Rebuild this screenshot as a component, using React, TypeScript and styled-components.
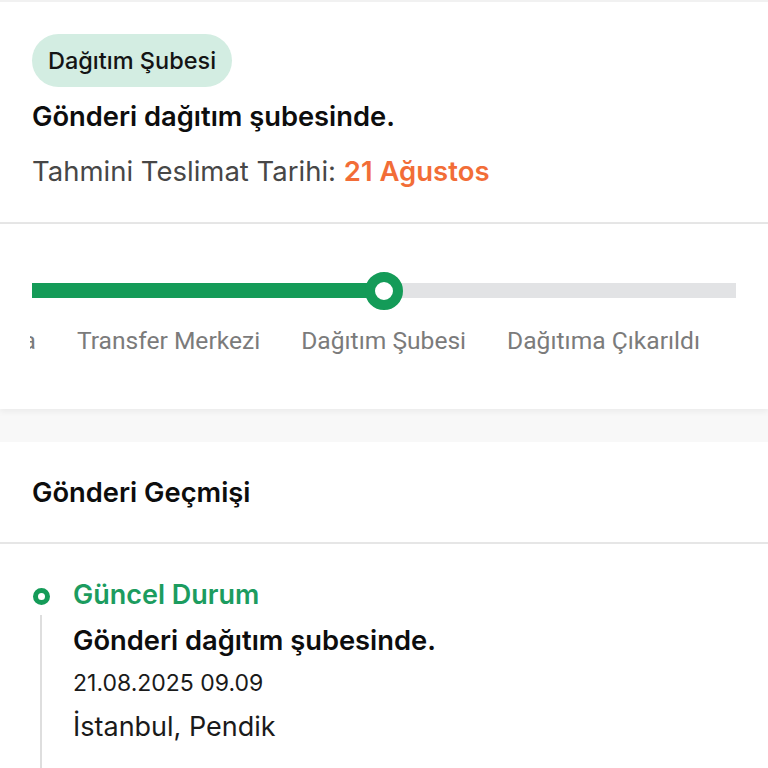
import React from "react";
import styled, { createGlobalStyle } from "styled-components";

const GlobalStyle = createGlobalStyle`
  html, body {
    margin: 0;
    padding: 0;
    background: #f8f8f8;
    font-family: Inter, "Noto Sans", sans-serif;
    -webkit-font-smoothing: antialiased;
  }
  * {
    box-sizing: border-box;
  }
`;

const Page = styled.div`
  width: 768px;
  height: 768px;
  overflow: hidden;
  display: flex;
  flex-direction: column;
`;

const StatusCard = styled.section`
  flex: none;
  background: #fff;
  border-top: 2px solid #f1f1f1;
  border-bottom: 2px solid #e6e6e6;
  padding: 32px 32px 0;
  height: 224px;
  display: flex;
  flex-direction: column;
  align-items: flex-start;
`;

const Badge = styled.span`
  display: inline-flex;
  align-items: center;
  height: 53px;
  padding: 0 16px;
  border-radius: 27px;
  background: #d3ede2;
  color: #141414;
  font-size: 23.5px;
  font-weight: 500;
`;

const Title = styled.h2`
  margin: 14px 0 0;
  font-size: 27.3px;
  font-weight: 600;
  color: #0d0d0d;
  line-height: 32px;
`;

const Estimate = styled.p`
  margin: 22px 0 0;
  font-size: 27.5px;
  color: #474747;
  line-height: 32px;
  span {
    color: #f26d37;
    font-weight: 600;
  }
`;

const ProgressCard = styled.section`
  flex: none;
  background: #fff;
  height: 185px;
  padding: 59px 32px 0;
  box-shadow: 0 3px 6px rgba(0, 0, 0, 0.05);
  position: relative;
  z-index: 1;
`;

const Track = styled.div`
  position: relative;
  height: 15px;
  background: #e2e3e5;
`;

const Fill = styled.div`
  height: 100%;
  background: #149b58;
`;

const Knob = styled.div`
  position: absolute;
  top: 50%;
  width: 38px;
  height: 38px;
  border-radius: 50%;
  border: 10px solid #149b58;
  background: #fff;
  transform: translate(-50%, -50%);
`;

const Labels = styled.div`
  margin: 28px -2px 0;
  overflow: hidden;
  display: flex;
  justify-content: flex-end;
  gap: 41px;
  padding-right: 38px;
`;

const Label = styled.span`
  flex: none;
  font-family: Roboto, "Liberation Sans", sans-serif;
  font-size: 24.6px;
  color: #7b7b7b;
  white-space: nowrap;
  line-height: 30px;
`;

const HistoryCard = styled.section`
  margin-top: 33px;
  background: #fff;
  flex: 1;
`;

const HistoryHeader = styled.h3`
  margin: 0;
  height: 102px;
  padding: 0 32px;
  display: flex;
  align-items: center;
  border-bottom: 2px solid #e6e6e6;
  font-size: 27.3px;
  font-weight: 600;
  color: #0d0d0d;
`;

const TimelineItem = styled.div`
  display: grid;
  grid-template-columns: 18px 1fr;
  column-gap: 23px;
  padding: 34px 32px 0;
`;

const Rail = styled.div`
  display: flex;
  flex-direction: column;
  align-items: center;
  padding-top: 10px;
`;

const Dot = styled.div<{ $active?: boolean }>`
  width: 17px;
  height: 17px;
  border-radius: 50%;
  border: 5px solid ${(p) => (p.$active ? "#149b58" : "#cfcfcf")};
  background: #fff;
`;

const RailLine = styled.div`
  width: 2px;
  flex: 1;
  min-height: 200px;
  margin-top: 10px;
  background: #dedede;
`;

const ItemBody = styled.div`
  display: flex;
  flex-direction: column;
`;

const ItemStatus = styled.div`
  font-size: 27px;
  font-weight: 600;
  color: #1c9c5f;
  line-height: 34px;
`;

const ItemTitle = styled.div`
  margin-top: 12px;
  font-size: 27.3px;
  font-weight: 600;
  color: #0d0d0d;
  line-height: 34px;
`;

const ItemDate = styled.div`
  margin-top: 10px;
  font-size: 23px;
  color: #1a1a1a;
  line-height: 30px;
`;

const ItemPlace = styled.div`
  margin-top: 12px;
  font-size: 27px;
  color: #1a1a1a;
  line-height: 34px;
`;

const steps = ["Yolda", "Transfer Merkezi", "Dağıtım Şubesi", "Dağıtıma Çıkarıldı"];
const progress = 50;

export default function App() {
  return (
    <Page>
      <GlobalStyle />
      <StatusCard>
        <Badge>Dağıtım Şubesi</Badge>
        <Title>Gönderi dağıtım şubesinde.</Title>
        <Estimate>
          Tahmini Teslimat Tarihi: <span>21 Ağustos</span>
        </Estimate>
      </StatusCard>

      <ProgressCard>
        <Track>
          <Fill style={{ width: `${progress}%` }} />
          <Knob style={{ left: `${progress}%` }} />
        </Track>
        <Labels>
          {steps.map((s) => (
            <Label key={s}>{s}</Label>
          ))}
        </Labels>
      </ProgressCard>

      <HistoryCard>
        <HistoryHeader>Gönderi Geçmişi</HistoryHeader>
        <TimelineItem>
          <Rail>
            <Dot $active />
            <RailLine />
          </Rail>
          <ItemBody>
            <ItemStatus>Güncel Durum</ItemStatus>
            <ItemTitle>Gönderi dağıtım şubesinde.</ItemTitle>
            <ItemDate>21.08.2025 09.09</ItemDate>
            <ItemPlace>İstanbul, Pendik</ItemPlace>
          </ItemBody>
        </TimelineItem>
      </HistoryCard>
    </Page>
  );
}
